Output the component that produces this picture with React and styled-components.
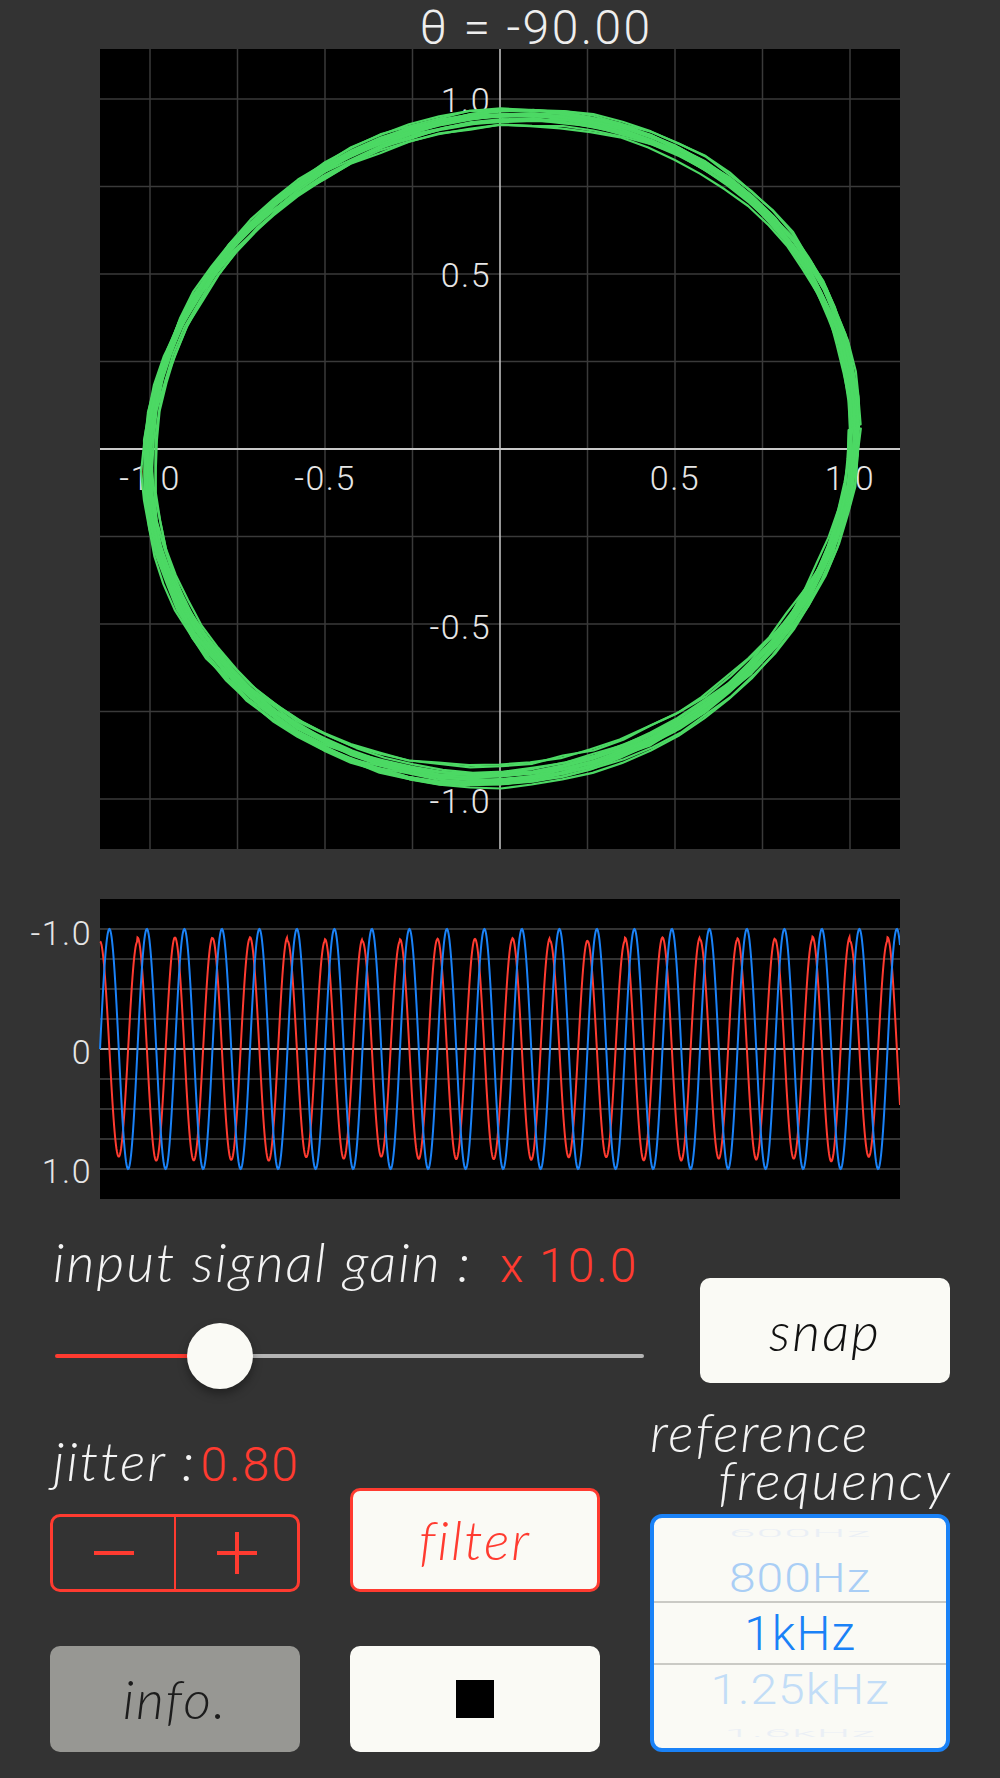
import React, { useMemo } from "react";
import styled, { createGlobalStyle } from "styled-components";

const LABEL_FONT = `"Lato", "Open Sans", sans-serif`;
const NUM_FONT = `"Roboto", "Liberation Sans", sans-serif`;

const RED = "#ff3b30";
const BLUE = "#1a82f7";
const GREEN = "#4cd964";
const PAPER = "#fafaf5";

const GlobalStyle = createGlobalStyle`
  html, body {
    margin: 0;
    padding: 0;
    background: #333333;
  }
  body {
    width: 1000px;
    height: 1778px;
    overflow: hidden;
  }
`;

function rng(seed) {
  let s = seed;
  return () => {
    s = (s * 16807) % 2147483647;
    return (s - 1) / 2147483646;
  };
}

const XYPlot = () => {
  const traces = useMemo(() => {
    const r = rng(1234);
    const out = [];
    for (let i = 0; i < 20; i++) {
      const ax = 353 + (r() - 0.5) * 10;
      const by = 329 + (r() - 0.5) * 20;
      const c = 20 + (r() - 0.5) * 12;
      const dx = (r() - 0.5) * 4;
      const dy = (r() - 0.5) * 6;
      let d = "";
      const steps = 72;
      for (let k = 0; k <= steps; k++) {
        const t = (k / steps) * Math.PI * 2;
        const n = (r() - 0.5) * 3;
        const x = 401.5 + dx + (ax + n) * Math.cos(t);
        const y = 397 + dy - ((by + n) * Math.sin(t) + c * Math.cos(t));
        d += `${k === 0 ? "M" : "L"}${x.toFixed(1)} ${y.toFixed(1)} `;
      }
      out.push(d + "Z");
    }
    return out;
  }, []);

  const ticks = [-4, -3, -2, -1, 1, 2, 3, 4].map((k) => 400 + k * 87.5);

  return (
    <PlotSvg width="800" height="800" viewBox="0 0 800 800">
      <rect width="800" height="800" fill="#000" />
      {ticks.map((p) => (
        <g key={p}>
          <line x1={p} y1="0" x2={p} y2="800" stroke="#3a3a3a" strokeWidth="1.5" />
          <line x1="0" y1={p} x2="800" y2={p} stroke="#3a3a3a" strokeWidth="1.5" />
        </g>
      ))}
      <line x1="400" y1="0" x2="400" y2="800" stroke="#c8c8c8" strokeWidth="1.5" />
      <line x1="0" y1="400" x2="800" y2="400" stroke="#c8c8c8" strokeWidth="2" />
      <g
        fill="#e6e6e6"
        fontFamily={NUM_FONT}
        fontWeight="300"
        fontSize="34"
        letterSpacing="1.5"
      >
        <text x="391" y="51" textAnchor="end" dominantBaseline="central">1.0</text>
        <text x="391" y="226" textAnchor="end" dominantBaseline="central">0.5</text>
        <text x="391" y="578" textAnchor="end" dominantBaseline="central">-0.5</text>
        <text x="391" y="752" textAnchor="end" dominantBaseline="central">-1.0</text>
        <text x="50" y="429" textAnchor="middle" dominantBaseline="central">-1.0</text>
        <text x="225" y="429" textAnchor="middle" dominantBaseline="central">-0.5</text>
        <text x="575" y="429" textAnchor="middle" dominantBaseline="central">0.5</text>
        <text x="750" y="429" textAnchor="middle" dominantBaseline="central">1.0</text>
      </g>
      <g fill="none" stroke={GREEN} strokeWidth="2.2" strokeLinejoin="round">
        {traces.map((d, i) => (
          <path key={i} d={d} />
        ))}
      </g>
    </PlotSvg>
  );
};

const Waveform = () => {
  const { blue, red } = useMemo(() => {
    const P = 37.5;
    const r = rng(987);
    const amps = Array.from({ length: 24 }, () => 110 + (r() - 0.5) * 5);
    let b = "";
    let rd = "";
    for (let x = 100; x <= 900; x += 0.5) {
      const ph = (2 * Math.PI * (x - 100)) / P;
      const cyc = Math.floor((x - 100) / P);
      const yb = 150 - 120 * Math.sin(ph);
      const yr = 150 - amps[cyc] * Math.cos(ph);
      b += `${x === 100 ? "M" : "L"}${x} ${yb.toFixed(1)} `;
      rd += `${x === 100 ? "M" : "L"}${x} ${yr.toFixed(1)} `;
    }
    return { blue: b, red: rd };
  }, []);

  const grid = [30, 60, 90, 120, 180, 210, 240, 270];

  return (
    <WaveSvg width="900" height="300" viewBox="0 0 900 300">
      <rect x="100" y="0" width="800" height="300" fill="#000" />
      {grid.map((y) => (
        <line key={y} x1="100" y1={y} x2="900" y2={y} stroke="#333" strokeWidth="2" />
      ))}
      <line x1="100" y1="150" x2="900" y2="150" stroke="#a8a8a8" strokeWidth="2" />
      <g
        fill="#e6e6e6"
        fontFamily={NUM_FONT}
        fontWeight="300"
        fontSize="34"
        letterSpacing="1.5"
        textAnchor="end"
      >
        <text x="92" y="34" dominantBaseline="central">-1.0</text>
        <text x="92" y="153" dominantBaseline="central">0</text>
        <text x="92" y="272" dominantBaseline="central">1.0</text>
      </g>
      <path d={red} fill="none" stroke={RED} strokeWidth="2" />
      <path d={blue} fill="none" stroke={BLUE} strokeWidth="2" />
    </WaveSvg>
  );
};

const App = () => {
  return (
    <>
      <GlobalStyle />
      <Screen>
        <Title>θ = -90.00</Title>
        <PlotWrap>
          <XYPlot />
        </PlotWrap>
        <Waveform />

        <Controls>
          <GainRow>
            <GainLeft>
              <Label>
                input signal gain :<Value $gap={28}>x 10.0</Value>
              </Label>
              <Slider>
                <Track $fill={165} />
                <Thumb $at={165} />
              </Slider>
            </GainLeft>
            <Button $top={46} $h={105}>snap</Button>
          </GainRow>

          <Lower>
            <Column>
              <Label $top={42}>
                jitter :<Value $gap={4}>0.80</Value>
              </Label>
              <Stepper>
                <StepHalf>
                  <Glyph />
                </StepHalf>
                <StepHalf $divider>
                  <Glyph $plus />
                </StepHalf>
              </Stepper>
              <Button $top={54} $bg="#979793" $color="#1c1c1c">
                info.
              </Button>
            </Column>

            <Column>
              <Button $top={99} $h={104} $border={RED} $color={RED}>
                filter
              </Button>
              <Button $top={54}>
                <StopSquare />
              </Button>
            </Column>

            <Column>
              <RefLabel>
                <span>reference</span>
                <span className="second">frequency</span>
              </RefLabel>
              <Picker>
                <PickerItem $h={40} $sy={0.22} $color="#eaeff5">600Hz</PickerItem>
                <PickerItem $h={48} $sy={0.86} $color="#a9cef5">800Hz</PickerItem>
                <PickerItem $h={64} $sy={1} $color={BLUE} $selected>
                  1kHz
                </PickerItem>
                <PickerItem $h={48} $sy={0.88} $color="#c2ddf7">1.25kHz</PickerItem>
                <PickerItem $h={40} $sy={0.22} $color="#eaeff5">1.6kHz</PickerItem>
              </Picker>
            </Column>
          </Lower>
        </Controls>
      </Screen>
    </>
  );
};

const Screen = styled.div`
  width: 1000px;
  height: 1778px;
  background: #333333;
  display: flex;
  flex-direction: column;
  font-family: ${NUM_FONT};
  overflow: hidden;
`;

const Title = styled.div`
  height: 49px;
  box-sizing: border-box;
  padding: 4px 0 0 72px;
  display: flex;
  justify-content: center;
  align-items: flex-start;
  font-size: 48px;
  font-weight: 300;
  letter-spacing: 2.4px;
  line-height: 1;
  color: #eeeeee;
`;

const PlotWrap = styled.div`
  padding-left: 100px;
  height: 800px;
`;

const PlotSvg = styled.svg`
  display: block;
`;

const WaveSvg = styled.svg`
  display: block;
  margin-top: 50px;
`;

const Controls = styled.div`
  padding: 33px 50px 0 50px;
  display: flex;
  flex-direction: column;
`;

const GainRow = styled.div`
  display: flex;
  justify-content: space-between;
  align-items: flex-start;
`;

const GainLeft = styled.div`
  display: flex;
  flex-direction: column;
  width: 600px;
`;

const Label = styled.div`
  margin-top: ${(p) => p.$top || 0}px;
  padding-left: 3px;
  font-family: ${LABEL_FONT};
  font-style: italic;
  font-weight: 300;
  font-size: 54px;
  letter-spacing: 2px;
  line-height: 60px;
  height: 60px;
  color: #f4f4f4;
  white-space: nowrap;
`;

const Value = styled.span`
  margin-left: ${(p) => p.$gap}px;
  font-family: ${NUM_FONT};
  font-style: normal;
  font-weight: 300;
  font-size: 48px;
  letter-spacing: 2px;
  line-height: 1;
  color: ${RED};
`;

const Slider = styled.div`
  position: relative;
  margin: 31px 0 0 5px;
  width: 589px;
  height: 66px;
`;

const Track = styled.div`
  position: absolute;
  left: 0;
  right: 0;
  top: 31px;
  height: 4px;
  border-radius: 2px;
  background: linear-gradient(
    to right,
    ${RED} 0,
    ${RED} ${(p) => p.$fill}px,
    #b4b4b4 ${(p) => p.$fill}px
  );
`;

const Thumb = styled.div`
  position: absolute;
  top: 0;
  left: ${(p) => p.$at - 33}px;
  width: 66px;
  height: 66px;
  border-radius: 50%;
  background: ${PAPER};
  box-shadow: 0 5px 10px rgba(0, 0, 0, 0.35);
`;

const Button = styled.div`
  flex: none;
  margin-top: ${(p) => p.$top || 0}px;
  width: 250px;
  height: ${(p) => p.$h || 106}px;
  box-sizing: border-box;
  border-radius: 10px;
  background: ${(p) => p.$bg || PAPER};
  border: ${(p) => (p.$border ? `3px solid ${p.$border}` : "none")};
  color: ${(p) => p.$color || "#111111"};
  display: flex;
  align-items: center;
  justify-content: center;
  font-family: ${LABEL_FONT};
  font-style: italic;
  font-weight: 300;
  font-size: 54px;
  letter-spacing: 2px;
  line-height: 1;
`;

const StopSquare = styled.div`
  width: 38px;
  height: 38px;
  background: #000;
`;

const Lower = styled.div`
  display: grid;
  grid-template-columns: 250px 250px 300px;
  column-gap: 50px;
  align-items: start;
`;

const Column = styled.div`
  display: flex;
  flex-direction: column;
`;

const Stepper = styled.div`
  margin-top: 23px;
  width: 250px;
  height: 78px;
  box-sizing: border-box;
  border: 3px solid ${RED};
  border-radius: 10px;
  display: flex;
`;

const StepHalf = styled.div`
  flex: 1;
  display: flex;
  align-items: center;
  justify-content: center;
  border-left: ${(p) => (p.$divider ? `2px solid ${RED}` : "none")};
`;

const Glyph = styled.span`
  position: relative;
  width: 40px;
  height: 42px;

  &::before,
  &::after {
    content: "";
    position: absolute;
    background: ${RED};
  }
  &::before {
    left: 0;
    right: 0;
    top: 19px;
    height: 4px;
  }
  &::after {
    display: ${(p) => (p.$plus ? "block" : "none")};
    top: 0;
    bottom: 0;
    left: 18px;
    width: 4px;
  }
`;

const RefLabel = styled.div`
  margin-top: 19px;
  display: flex;
  flex-direction: column;
  font-family: ${LABEL_FONT};
  font-style: italic;
  font-weight: 300;
  font-size: 54px;
  letter-spacing: 2px;
  line-height: 48px;
  color: #f4f4f4;
  white-space: nowrap;

  .second {
    align-self: flex-end;
    margin-right: -2px;
  }
`;

const Picker = styled.div`
  margin-top: 10px;
  width: 300px;
  height: 238px;
  box-sizing: border-box;
  border: 4px solid ${BLUE};
  border-radius: 12px;
  background: ${PAPER};
  overflow: hidden;
  display: flex;
  flex-direction: column;
  justify-content: center;
`;

const PickerItem = styled.div`
  flex: none;
  height: ${(p) => p.$h}px;
  box-sizing: border-box;
  display: flex;
  align-items: center;
  justify-content: center;
  font-family: ${NUM_FONT};
  font-weight: 300;
  font-size: 48px;
  letter-spacing: 1px;
  color: ${(p) => p.$color};
  transform: scaleY(${(p) => p.$sy});
  border-top: ${(p) => (p.$selected ? "2px solid #cacac5" : "none")};
  border-bottom: ${(p) => (p.$selected ? "2px solid #cacac5" : "none")};
`;

export default App;
